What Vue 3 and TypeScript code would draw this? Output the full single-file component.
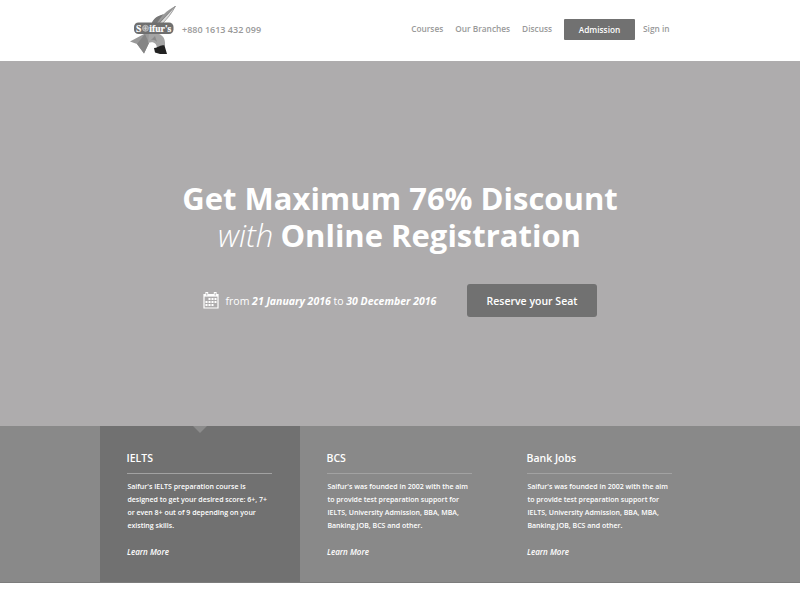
<script setup lang="ts">
interface Course {
  title: string
  lines: string[]
  active: boolean
}

const supportLines: string[] = [
  "Saifur's was founded in 2002 with the aim",
  'to provide test preparation support for',
  'IELTS, University Admission, BBA, MBA,',
  'Banking JOB, BCS and other.',
]

const courses: Course[] = [
  {
    title: 'IELTS',
    lines: [
      "Saifur's IELTS preparation course is",
      'designed to get your desired score: 6+, 7+',
      'or even 8+ out of 9 depending on your',
      'existing skills.',
    ],
    active: true,
  },
  { title: 'BCS', lines: supportLines, active: false },
  { title: 'Bank Jobs', lines: supportLines, active: false },
]

const dots: { x: number; y: number }[] = [
  [5, 8, 11],
  [2, 5, 8, 11],
  [2, 5, 8],
].flatMap((row, r) => row.map((x) => ({ x: x + 0.5, y: 6 + r * 3 })))
</script>

<template>
  <div class="page">
    <header class="header">
      <svg class="logo" viewBox="0 0 50 52" aria-label="Saifur's">
        <path d="M23 20C25 15 31 12 35 11C38 8 42 5 46.500 3C43 10 37 16 33 20Z" fill="#999" />
        <path d="M23 20C24 16 28 13 34 11.500L28 20Z" fill="#777" />
        <path d="M31 20L46.500 3C43 10 37 16 34 20Z" fill="#ddd" />
        <path d="M46.500 3C43 10 38 16 34 20M46.500 3L30 20" stroke="#777" stroke-width=".6" fill="none" />
        <path d="M15 31L1 38.500L8 41L15 50.500L20 40L23 31Z" fill="#999" />
        <path d="M16 31L8 41L15 50.500L20 40Z" fill="#858585" />
        <path d="M20 31L30 31C35 33 36.500 37 36 43L28 46C28 41 25 38 19 40Z" fill="#a5a5a5" />
        <path d="M19 40C22 36 25 36 28 39L26 33Z" fill="#8a8a8a" />
        <path d="M25 45C28 45 32 41 35.500 42.500L38 51H31L26 49.500Z" fill="#222" />
        <rect x="5" y="19.500" width="39.500" height="11.500" rx="4.500" fill="#6f6f6f" />
        <text x="7" y="28.700" class="logo-text">S</text>
        <circle cx="16.500" cy="25.300" r="3" fill="#999" stroke="#ccc" stroke-width=".7" />
        <path d="M14.500 25.300H18.500M16.500 23.300V27.300" stroke="#ddd" stroke-width=".6" />
        <text x="20.300" y="28.700" class="logo-text" textLength="22">ifur's</text>
      </svg>
      <span class="phone">+880 1613 432 099</span>
      <nav class="nav">
        <a class="courses">Courses</a>
        <a class="branches">Our Branches</a>
        <a class="discuss">Discuss</a>
        <a class="admission">Admission</a>
        <a class="signin">Sign in</a>
      </nav>
    </header>

    <main class="hero">
      <h1 class="title">
        <span class="title-top">Get Maximum 76% Discount</span>
        <span class="title-bottom"><em>with</em> Online Registration</span>
      </h1>
      <div class="offer">
        <svg class="calendar" viewBox="0 0 16 17">
          <path d="M1 2.500H15V16H1Z" fill="none" stroke="#fff" stroke-width="1.200" />
          <path d="M1 3.500H15" stroke="#fff" stroke-width="2.200" />
          <path d="M3.800 0V4M12.200 0V4" stroke="#fff" stroke-width="2.800" />
          <path d="M3.800 1V3.500M12.200 1V3.500" stroke="#aeacad" stroke-width=".9" />
          <rect v-for="(d, i) in dots" :key="i" :x="d.x" :y="d.y" width="2" height="2" fill="#fff" />
        </svg>
        <p class="dates">from <b>21 January 2016</b> to <b>30 December 2016</b></p>
        <button class="reserve">Reserve your Seat</button>
      </div>
    </main>

    <section class="features">
      <article v-for="course in courses" :key="course.title" class="card" :class="{ active: course.active }">
        <h2>{{ course.title }}</h2>
        <p class="copy">
          <span v-for="line in course.lines" :key="line">{{ line }}</span>
        </p>
        <a class="more">Learn More</a>
      </article>
    </section>
  </div>
</template>

<style>
body {
  background: #fff;
}
</style>

<style scoped>
.page {
  width: 800px;
  height: 600px;
  overflow: hidden;
  font-family: 'Open Sans', sans-serif;
  color: #fff;
  background: #fff;
}
.header {
  display: flex;
  align-items: center;
  height: 61px;
  box-sizing: border-box;
  padding: 0 130.5px 3px 129px;
  color: #999;
  white-space: nowrap;
}
.logo {
  width: 50px;
  height: 52px;
  flex: none;
}
.logo-text {
  font: bold 9.5px 'Liberation Serif', serif;
  fill: #fff;
  stroke: #fff;
  stroke-width: 0.2px;
}
.phone {
  margin-left: 3px;
  font-size: 9px;
  font-weight: 600;
}
.nav {
  display: flex;
  align-items: center;
  margin-left: auto;
  font-size: 8.3px;
  font-weight: 600;
}
.nav a:not(.admission) {
  margin-bottom: 1px;
}
.branches,
.discuss {
  margin-left: 12px;
}
.admission {
  display: flex;
  align-items: center;
  justify-content: center;
  width: 71px;
  height: 21px;
  box-sizing: border-box;
  padding-bottom: 1px;
  margin: 1px 8px 0 12px;
  border-radius: 1px;
  background: #717171;
  color: #fff;
}
.hero {
  height: 365px;
  box-sizing: border-box;
  padding-top: 119px;
  background: #aeacad;
}
.title {
  display: flex;
  flex-direction: column;
  align-items: center;
  margin: 0;
  font-size: 31px;
  font-weight: 700;
  line-height: 37px;
  white-space: nowrap;
}
.title em {
  font-weight: 300;
  margin-right: -1px;
}
.title-bottom {
  padding-right: 1px;
}
.offer {
  display: flex;
  align-items: center;
  height: 33px;
  margin-top: 30.4px;
  padding-left: 202.5px;
  white-space: nowrap;
}
.calendar {
  width: 16px;
  height: 17px;
  margin-bottom: 1.5px;
}
.dates {
  width: 241.5px;
  margin: 0 0 0 7px;
  font-size: 10.5px;
}
.dates b {
  font-style: italic;
}
.reserve {
  width: 130px;
  height: 33px;
  padding: 0;
  border: 0;
  border-radius: 3px;
  background: #717171;
  color: #fff;
  font: 600 10.5px 'Open Sans', sans-serif;
}
.features {
  display: flex;
  height: 157px;
  box-sizing: border-box;
  padding: 0 100px;
  background: #898989;
  border-bottom: 1px solid #7c7c7c;
}
.card {
  position: relative;
  width: 200px;
  box-sizing: border-box;
  padding: 24px 28px 0 27px;
}
.active {
  background: #717171;
}
.active::before {
  content: '';
  position: absolute;
  top: 0;
  left: 93px;
  border: 7px solid transparent;
  border-top-color: #8c8c8c;
  border-bottom: 0;
}
.card h2 {
  margin: 0;
  height: 23px;
  border-bottom: 1px solid #a2a2a2;
  font-size: 10.5px;
  font-weight: 600;
  line-height: 16px;
  text-indent: -0.5px;
}
.copy {
  display: flex;
  flex-direction: column;
  margin: 6px 0 0;
  padding-left: 0.4px;
  font-size: 7px;
  font-weight: 600;
  line-height: 13px;
  white-space: nowrap;
}
.more {
  display: block;
  margin-top: 13px;
  font-size: 8px;
  font-style: italic;
  font-weight: 600;
  line-height: 13px;
}
</style>
